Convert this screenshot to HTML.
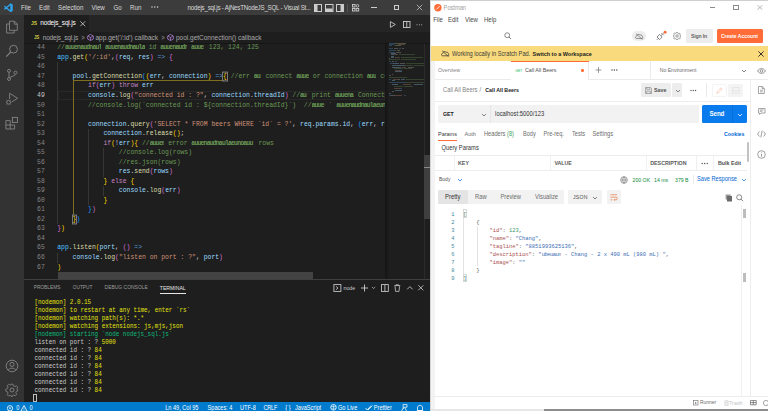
<!DOCTYPE html>
<html><head><meta charset="utf-8"><title>screen</title>
<style>
*{box-sizing:border-box;margin:0;padding:0}
html,body{width:768px;height:411px;overflow:hidden;background:#fff}
body{position:relative;font-family:"Liberation Sans",sans-serif}
.a{position:absolute}
.t{position:absolute;white-space:nowrap;line-height:1;transform:scaleY(1.14);transform-origin:0 50%}
/* VS Code */
#vs{position:absolute;left:0;top:0;width:430px;height:411px;background:#1e1e1e;overflow:hidden}
.ln{position:absolute;left:24px;transform:translateY(0px) scaleY(1.1);transform-origin:0 50%;width:20.8px;text-align:right;font-family:"Liberation Mono",monospace;font-size:6.433px;line-height:9.53px;height:9.53px;color:#858585;white-space:pre}
.ln.cur{color:#c6c6c6}
.cl{position:absolute;left:57.2px;transform:translateY(0.05px) scaleY(1.1);transform-origin:0 50%;font-family:"Liberation Mono",monospace;font-size:6.433px;line-height:9.53px;height:9.53px;white-space:pre}
.th{display:inline-block;overflow:hidden;vertical-align:top;letter-spacing:-0.8px;font-weight:bold}
.bx{outline:1px solid #7a7a7a;outline-offset:-0.5px}
.tl{position:absolute;left:34.5px;transform:translateY(0.3px) scaleY(1.22);transform-origin:0 50%;font-family:"Liberation Mono",monospace;font-size:5.900px;line-height:7.95px;height:7.95px;white-space:pre}
.mt{position:absolute;white-space:nowrap;line-height:1;color:#dadada;font-size:6.2px;transform:scaleY(1.12);transform-origin:0 50%}
.sb{position:absolute;white-space:nowrap;line-height:1;color:#ffffff;font-size:5.6px;top:405.5px;transform:scaleY(1.12);transform-origin:0 50%}
.ic{position:absolute}
/* Postman */
#pm{position:absolute;left:430px;top:0;width:338px;height:411px;background:#ffffff;overflow:hidden}
.p{position:absolute;white-space:nowrap;line-height:1;color:#6b6b6b;transform:scaleY(1.12);transform-origin:0 50%}

</style></head><body>
<div id="vs">
<!-- title bar -->
<div class="a" style="left:0;top:0;width:430px;height:15px;background:#3c3c3c"></div>
<svg class="ic" style="left:0;top:0" width="20" height="15" viewBox="0 0 20 15"><path d="M10.3 3.5 L12.7 4.5 V10.9 L10.3 12 Z" fill="#2ea6f2"/><path d="M10.8 4.1 L4.8 9.1 M10.8 11.4 L4.8 6.4" stroke="#2ea6f2" stroke-width="1.25" stroke-linecap="round"/></svg>
<div class="mt" style="left:21px;top:4.9px">File</div>
<div class="mt" style="left:39px;top:4.9px">Edit</div>
<div class="mt" style="left:58px;top:4.9px">Selection</div>
<div class="mt" style="left:91.5px;top:4.9px">View</div>
<div class="mt" style="left:113.5px;top:4.9px">Go</div>
<div class="mt" style="left:130px;top:4.9px">Run</div>
<svg class="ic" style="left:151px;top:6.2px" width="8" height="2" viewBox="0 0 8 2"><circle cx="1" cy="1" r="0.7" fill="#e0e0e0"/><circle cx="3.8" cy="1" r="0.7" fill="#e0e0e0"/><circle cx="6.6" cy="1" r="0.7" fill="#e0e0e0"/></svg>
<div class="mt" style="left:187.6px;top:4.8px;font-size:6.2px;letter-spacing:-0.23px">nodejs_sql.js - AjNesTNodeJS_SQL - Visual St...</div>
<svg class="ic" style="left:314px;top:4px" width="46" height="8" viewBox="0 0 46 8">
 <rect x="0.5" y="0.5" width="7" height="7" fill="none" stroke="#cccccc" stroke-width="1"/><rect x="1" y="1" width="2.5" height="6" fill="#cccccc"/>
 <rect x="11.5" y="0.5" width="7.5" height="7" fill="none" stroke="#cccccc" stroke-width="1"/><rect x="12" y="4.5" width="6.5" height="2.5" fill="#cccccc"/>
 <rect x="22.5" y="0.5" width="7" height="7" fill="none" stroke="#cccccc" stroke-width="1"/><rect x="26.5" y="1" width="2.5" height="6" fill="#cccccc"/>
 <rect x="33" y="0" width="0.8" height="8" fill="#5a5a5a"/>
 <rect x="38.5" y="0.5" width="2.5" height="2.5" fill="none" stroke="#cccccc" stroke-width="0.9"/><rect x="38.5" y="4.5" width="2.5" height="2.5" fill="none" stroke="#cccccc" stroke-width="0.9"/><circle cx="43.5" cy="1.8" r="1.3" fill="none" stroke="#cccccc" stroke-width="0.9"/><rect x="42.2" y="4.5" width="2.5" height="2.5" fill="none" stroke="#cccccc" stroke-width="0.9"/>
</svg>
<div class="a" style="left:371px;top:7px;width:6px;height:0.8px;background:#cccccc"></div>
<div class="a" style="left:393.5px;top:4.5px;width:5.5px;height:5.5px;border:0.8px solid #cccccc"></div>
<svg class="ic" style="left:416px;top:4px" width="7" height="7" viewBox="0 0 7 7"><path d="M0.8 0.8 L6.2 6.2 M6.2 0.8 L0.8 6.2" stroke="#cccccc" stroke-width="0.75"/></svg>

<!-- activity bar -->
<div class="a" style="left:0;top:15px;width:24px;height:387px;background:#333333"></div>
<svg class="ic" style="left:5px;top:20px" width="14" height="14" viewBox="0 0 14 14"><path d="M4.5 1.2 H9.5 L12.3 4 V10.3 H4.5 Z M9.3 1.2 V4.2 H12.3" fill="none" stroke="#858585" stroke-width="0.9"/><path d="M4.5 4 H1.6 V13 H9.2 V10.3" fill="none" stroke="#858585" stroke-width="0.9"/></svg>
<svg class="ic" style="left:5px;top:44px" width="14" height="14" viewBox="0 0 14 14"><circle cx="8.5" cy="5.2" r="3.9" fill="none" stroke="#858585" stroke-width="0.95"/><path d="M5.7 8 L1.3 12.6" stroke="#858585" stroke-width="1.1"/></svg>
<svg class="ic" style="left:5px;top:68px" width="14" height="14" viewBox="0 0 14 14"><circle cx="4" cy="2.8" r="1.5" fill="none" stroke="#858585" stroke-width="0.9"/><circle cx="4" cy="11" r="1.5" fill="none" stroke="#858585" stroke-width="0.9"/><circle cx="10.4" cy="4.6" r="1.5" fill="none" stroke="#858585" stroke-width="0.9"/><path d="M4 4.3 V9.5 M10.4 6.1 C10.4 8.3 6 8 4.6 9.8" fill="none" stroke="#858585" stroke-width="0.9"/></svg>
<svg class="ic" style="left:5px;top:92px" width="14" height="14" viewBox="0 0 14 14"><path d="M4.6 7 V1.3 L12.6 6.3 L6.8 9.9" fill="none" stroke="#858585" stroke-width="0.9"/><circle cx="3.6" cy="10.3" r="1.9" fill="none" stroke="#858585" stroke-width="0.9"/><path d="M1 10.3 H1.7 M5.5 10.3 H6.3 M1.5 8 L2.3 8.7 M5.7 8 L4.9 8.7 M1.5 12.6 L2.3 11.9 M5.7 12.6 L4.9 11.9" stroke="#858585" stroke-width="0.7"/></svg>
<svg class="ic" style="left:5px;top:116px" width="14" height="14" viewBox="0 0 14 14"><path d="M0.9 4.6 H5.2 V9 H0.9 Z M0.9 9 V13 H9.6 V9 H5.2 V13" fill="none" stroke="#858585" stroke-width="0.9"/><rect x="7.4" y="1.4" width="5" height="5" fill="none" stroke="#858585" stroke-width="0.9"/></svg>
<svg class="ic" style="left:5px;top:359px" width="14" height="14" viewBox="0 0 14 14"><circle cx="7" cy="7" r="5.8" fill="none" stroke="#858585" stroke-width="0.9"/><circle cx="7" cy="5.4" r="2.1" fill="none" stroke="#858585" stroke-width="0.9"/><path d="M3.2 11.2 C4 8.5 10 8.5 10.8 11.2" fill="none" stroke="#858585" stroke-width="0.9"/></svg>
<svg class="ic" style="left:5px;top:383px" width="14" height="14" viewBox="0 0 14 14"><path d="M6 1.2 H8 L8.4 3 L9.8 3.7 L11.4 2.8 L12.8 4.2 L11.9 5.8 L12.5 7.2 L14 7.6 V9.6 M7 4.8 A2.2 2.2 0 1 0 7.01 4.8" fill="none" stroke="#858585" stroke-width="0"/><circle cx="7" cy="7" r="2" fill="none" stroke="#858585" stroke-width="0.9"/><path d="M6 1.2 L8 1.2 L8.4 2.9 L9.9 3.6 L11.4 2.7 L12.8 4.1 L11.9 5.6 L12.5 7.1 L12.8 7 L12.8 7 L12.8 7.9 L11.4 8.3 L10.8 9.8 L11.7 11.4 L10.3 12.8 L8.8 11.9 L7.4 12.5 L7 14 L6 12.6 L5.1 12.2 L3.6 13.1 L2.2 11.7 L3 10.2 L2.4 8.7 L0.8 8.2 V6.2 L2.4 5.7 L3 4.2 L2.2 2.7 L3.6 1.3 L5.1 2.2 L5.6 2.0 Z" fill="none" stroke="#858585" stroke-width="0.85"/></svg>

<!-- tab bar -->
<div class="a" style="left:24px;top:15px;width:406px;height:17px;background:#252526"></div>
<div class="a" style="left:24px;top:15px;width:65px;height:17px;background:#1e1e1e"></div>
<div class="t" style="left:31px;top:21.2px;font-size:5px;font-weight:bold;color:#cbcb41">JS</div>
<div class="t" style="left:40.3px;top:20.4px;font-size:6.5px;color:#ffffff;letter-spacing:-0.18px">nodejs_sql.js</div>
<svg class="ic" style="left:80px;top:21px" width="6" height="6" viewBox="0 0 6 6"><path d="M0.3 0.3 L5.2 5.2 M5.2 0.3 L0.3 5.2" stroke="#d8d8d8" stroke-width="0.75"/></svg>
<svg class="ic" style="left:389px;top:20.5px" width="36" height="7" viewBox="0 0 36 7"><path d="M1.4 0.6 L6.3 3.5 L1.4 6.4 Z" fill="none" stroke="#cccccc" stroke-width="0.85"/><rect x="14.5" y="0.5" width="6.5" height="6" fill="none" stroke="#cccccc" stroke-width="0.9"/><path d="M17.75 0.5 V6.5" stroke="#cccccc" stroke-width="0.9"/><circle cx="28" cy="3.7" r="0.5" fill="#cccccc"/><circle cx="30.3" cy="3.7" r="0.5" fill="#cccccc"/><circle cx="32.6" cy="3.7" r="0.5" fill="#cccccc"/></svg>

<!-- breadcrumb -->
<div class="t" style="left:34px;top:35.6px;font-size:4.6px;font-weight:bold;color:#cbcb41;letter-spacing:-0.2px">JS</div>
<div class="t" style="left:42.7px;top:34.6px;font-size:6.5px;color:#a9a9a9;letter-spacing:-0.17px">nodejs_sql.js</div>
<div class="t" style="left:81.2px;top:34.8px;font-size:6px;color:#a9a9a9">&gt;</div>
<svg class="ic" style="left:86.8px;top:34.2px" width="7" height="7" viewBox="0 0 7 7"><path d="M3.5 0.4 L6.3 2 V5 L3.5 6.6 L0.7 5 V2 Z" fill="none" stroke="#b180d7" stroke-width="0.8"/><path d="M1.2 2.2 L3.5 3.5 L5.8 2.2 M3.5 3.5 V6.2" fill="none" stroke="#b180d7" stroke-width="0.75"/></svg>
<div class="t" style="left:95.5px;top:34.6px;font-size:6.53px;color:#a9a9a9">app.get('/:id') callback</div>
<div class="t" style="left:161.2px;top:34.8px;font-size:6px;color:#a9a9a9">&gt;</div>
<svg class="ic" style="left:167px;top:34.2px" width="7" height="7" viewBox="0 0 7 7"><path d="M3.5 0.4 L6.3 2 V5 L3.5 6.6 L0.7 5 V2 Z" fill="none" stroke="#b180d7" stroke-width="0.8"/><path d="M1.2 2.2 L3.5 3.5 L5.8 2.2 M3.5 3.5 V6.2" fill="none" stroke="#b180d7" stroke-width="0.75"/></svg>
<div class="t" style="left:176px;top:34.6px;font-size:6.49px;color:#a9a9a9">pool.getConnection() callback</div>
<div class="a" style="left:24px;top:43px;width:406px;height:1px;background:#161616"></div>

<!-- editor -->
<div class="a" style="left:57.7px;top:90.6px;width:327px;height:9.4px;border:1px solid #282828"></div>
<div style="position:absolute;left:57.00px;top:62.41px;width:1px;height:162.01px;background:#363636"></div>
<div style="position:absolute;left:73.00px;top:81.47px;width:1px;height:133.42px;background:#363636"></div>
<div style="position:absolute;left:88.00px;top:129.12px;width:1px;height:76.24px;background:#363636"></div>
<div style="position:absolute;left:103.00px;top:148.18px;width:1px;height:28.59px;background:#363636"></div>
<div style="position:absolute;left:103.00px;top:186.30px;width:1px;height:9.53px;background:#363636"></div>
<div style="position:absolute;left:57.00px;top:253.01px;width:1px;height:9.53px;background:#363636"></div>
<div style="position:absolute;left:73px;top:80px;width:1px;height:134.89px;background:#7f6d20"></div>
<div style="position:absolute;left:73px;top:80px;width:150.54px;height:1px;background:#7f6d20"></div>
<div class="ln" style="top:43.35px">44</div>
<div class="cl" style="top:43.35px"><span style="color:#6a9955">//</span><span class="th" style="width:36.28px;color:#6a9955">auuenaudnaul</span><span style="color:#6a9955"> </span><span class="th" style="width:39.76px;color:#6a9955">auuenaudnaula</span><span style="color:#6a9955"> id </span><span class="th" style="width:27.02px;color:#6a9955">auuenaudn</span><span style="color:#6a9955"> </span><span class="th" style="width:13.90px;color:#6a9955">auue</span><span style="color:#6a9955"> 123, 124, 125</span></div>
<div class="ln" style="top:52.88px">45</div>
<div class="cl" style="top:52.88px"><span style="color:#4fc1ff">app</span><span style="color:#d4d4d4">.</span><span style="color:#dcdcaa">get</span><span style="color:#ffd700">(</span><span style="color:#ce9178">&#x27;/:id&#x27;</span><span style="color:#d4d4d4">,</span><span style="color:#da70d6">(</span><span style="color:#9cdcfe">req</span><span style="color:#d4d4d4">, </span><span style="color:#9cdcfe">res</span><span style="color:#da70d6">)</span><span style="color:#d4d4d4"> </span><span style="color:#569cd6">=&gt;</span><span style="color:#d4d4d4"> </span><span style="color:#da70d6">{</span></div>
<div class="ln" style="top:62.41px">46</div>
<div class="cl" style="top:62.41px"></div>
<div class="ln" style="top:71.94px">47</div>
<div class="cl" style="top:71.94px"><span style="color:#d4d4d4">    </span><span style="color:#9cdcfe">pool</span><span style="color:#d4d4d4">.</span><span style="color:#dcdcaa">getConnection</span><span style="color:#179fff">(</span><span style="color:#ffd700">(</span><span style="color:#9cdcfe">err</span><span style="color:#d4d4d4">, </span><span style="color:#9cdcfe">connection</span><span style="color:#ffd700">)</span><span style="color:#d4d4d4"> </span><span style="color:#569cd6">=&gt;</span><span class="bx" style="color:#ffd700">{</span><span style="color:#6a9955"> //err </span><span class="th" style="width:7.72px;color:#6a9955">au</span><span style="color:#6a9955"> connect </span><span class="th" style="width:12.74px;color:#6a9955">auue</span><span style="color:#6a9955"> or connection </span><span class="th" style="width:9.65px;color:#6a9955">auu</span><span style="color:#6a9955"> connect</span></div>
<div class="ln" style="top:81.47px">48</div>
<div class="cl" style="top:81.47px"><span style="color:#d4d4d4">        </span><span style="color:#c586c0">if</span><span style="color:#da70d6">(</span><span style="color:#9cdcfe">err</span><span style="color:#da70d6">)</span><span style="color:#d4d4d4"> </span><span style="color:#c586c0">throw</span><span style="color:#d4d4d4"> </span><span style="color:#9cdcfe">err</span></div>
<div class="ln cur" style="top:91.00px">49</div>
<div class="cl" style="top:91.00px"><span style="color:#d4d4d4">        </span><span style="color:#9cdcfe">console</span><span style="color:#d4d4d4">.</span><span style="color:#dcdcaa">log</span><span style="color:#da70d6">(</span><span style="color:#ce9178">&quot;connected id : ?&quot;</span><span style="color:#d4d4d4">, </span><span style="color:#9cdcfe">connection</span><span style="color:#d4d4d4">.</span><span style="color:#9cdcfe">threadId</span><span style="color:#da70d6">)</span><span style="color:#6a9955"> //</span><span class="th" style="width:7.72px;color:#6a9955">au</span><span style="color:#6a9955"> print </span><span class="th" style="width:19.30px;color:#6a9955">auuena</span><span style="color:#6a9955"> Connected</span></div>
<div class="ln" style="top:100.53px">50</div>
<div class="cl" style="top:100.53px"><span style="color:#6a9955">        //console.log(`connected id : ${connection.threadId}`)  //</span><span class="th" style="width:13.12px;color:#6a9955">auue</span><span style="color:#6a9955"> ` </span><span class="th" style="width:54.04px;color:#6a9955">auuenaudnaulaeunoa</span></div>
<div class="ln" style="top:110.06px">51</div>
<div class="cl" style="top:110.06px"></div>
<div class="ln" style="top:119.59px">52</div>
<div class="cl" style="top:119.59px"><span style="color:#d4d4d4">        </span><span style="color:#9cdcfe">connection</span><span style="color:#d4d4d4">.</span><span style="color:#dcdcaa">query</span><span style="color:#da70d6">(</span><span style="color:#ce9178">&#x27;SELECT * FROM beers WHERE `id` = ?&#x27;</span><span style="color:#d4d4d4">, </span><span style="color:#9cdcfe">req</span><span style="color:#d4d4d4">.</span><span style="color:#9cdcfe">params</span><span style="color:#d4d4d4">.</span><span style="color:#9cdcfe">id</span><span style="color:#d4d4d4">, </span><span style="color:#179fff">(</span><span style="color:#9cdcfe">err</span><span style="color:#d4d4d4">, </span><span style="color:#9cdcfe">rows</span><span style="color:#179fff">)</span></div>
<div class="ln" style="top:129.12px">53</div>
<div class="cl" style="top:129.12px"><span style="color:#d4d4d4">            </span><span style="color:#9cdcfe">connection</span><span style="color:#d4d4d4">.</span><span style="color:#dcdcaa">release</span><span style="color:#ffd700">(</span><span style="color:#ffd700">)</span><span style="color:#d4d4d4">;</span></div>
<div class="ln" style="top:138.65px">54</div>
<div class="cl" style="top:138.65px"><span style="color:#d4d4d4">            </span><span style="color:#c586c0">if</span><span style="color:#ffd700">(</span><span style="color:#d4d4d4">!</span><span style="color:#9cdcfe">err</span><span style="color:#ffd700">)</span><span style="color:#ffd700">{</span><span style="color:#6a9955"> //</span><span class="th" style="width:14.67px;color:#6a9955">auuen</span><span style="color:#6a9955"> error </span><span class="th" style="width:63.30px;color:#6a9955">auuenaudnaulaeunoauu</span><span style="color:#6a9955"> rows</span></div>
<div class="ln" style="top:148.18px">55</div>
<div class="cl" style="top:148.18px"><span style="color:#6a9955">                //console.log(rows)</span></div>
<div class="ln" style="top:157.71px">56</div>
<div class="cl" style="top:157.71px"><span style="color:#6a9955">                //res.json(rows)</span></div>
<div class="ln" style="top:167.24px">57</div>
<div class="cl" style="top:167.24px"><span style="color:#d4d4d4">                </span><span style="color:#9cdcfe">res</span><span style="color:#d4d4d4">.</span><span style="color:#dcdcaa">send</span><span style="color:#da70d6">(</span><span style="color:#9cdcfe">rows</span><span style="color:#da70d6">)</span></div>
<div class="ln" style="top:176.77px">58</div>
<div class="cl" style="top:176.77px"><span style="color:#d4d4d4">            </span><span style="color:#ffd700">}</span><span style="color:#d4d4d4"> </span><span style="color:#c586c0">else</span><span style="color:#d4d4d4"> </span><span style="color:#ffd700">{</span></div>
<div class="ln" style="top:186.30px">59</div>
<div class="cl" style="top:186.30px"><span style="color:#d4d4d4">                </span><span style="color:#9cdcfe">console</span><span style="color:#d4d4d4">.</span><span style="color:#dcdcaa">log</span><span style="color:#da70d6">(</span><span style="color:#9cdcfe">err</span><span style="color:#da70d6">)</span></div>
<div class="ln" style="top:195.83px">60</div>
<div class="cl" style="top:195.83px"><span style="color:#d4d4d4">            </span><span style="color:#ffd700">}</span></div>
<div class="ln" style="top:205.36px">61</div>
<div class="cl" style="top:205.36px"><span style="color:#d4d4d4">        </span><span style="color:#179fff">}</span><span style="color:#da70d6">)</span></div>
<div class="ln" style="top:214.89px">62</div>
<div class="cl" style="top:214.89px"><span style="color:#d4d4d4">    </span><span class="bx" style="color:#ffd700">}</span><span style="color:#179fff">)</span></div>
<div class="ln" style="top:224.42px">63</div>
<div class="cl" style="top:224.42px"><span style="color:#da70d6">}</span><span style="color:#ffd700">)</span></div>
<div class="ln" style="top:233.95px">64</div>
<div class="cl" style="top:233.95px"></div>
<div class="ln" style="top:243.48px">65</div>
<div class="cl" style="top:243.48px"><span style="color:#4fc1ff">app</span><span style="color:#d4d4d4">.</span><span style="color:#dcdcaa">listen</span><span style="color:#ffd700">(</span><span style="color:#9cdcfe">port</span><span style="color:#d4d4d4">, </span><span style="color:#da70d6">(</span><span style="color:#da70d6">)</span><span style="color:#d4d4d4"> </span><span style="color:#569cd6">=&gt;</span></div>
<div class="ln" style="top:253.01px">66</div>
<div class="cl" style="top:253.01px"><span style="color:#d4d4d4">    </span><span style="color:#9cdcfe">console</span><span style="color:#d4d4d4">.</span><span style="color:#dcdcaa">log</span><span style="color:#da70d6">(</span><span style="color:#ce9178">&quot;listen on port : ?&quot;</span><span style="color:#d4d4d4">, </span><span style="color:#9cdcfe">port</span><span style="color:#da70d6">)</span></div>
<div class="ln" style="top:262.54px">67</div>
<div class="cl" style="top:262.54px"><span style="color:#ffd700">)</span></div>
<!-- minimap -->
<div class="a" style="left:385px;top:43.5px;width:39px;height:235px;background:#1e1e1e"></div>
<div class="a" style="left:385px;top:43.5px;width:4px;height:235px;background:linear-gradient(90deg,#141414,#1e1e1e)"></div>
<div style="position:absolute;left:389px;top:43.00px;width:6px;height:1.1px;background:#4f9fd8;opacity:.3"></div>
<div style="position:absolute;left:395px;top:43.00px;width:11px;height:1.1px;background:#d8d89a;opacity:.3"></div>
<div style="position:absolute;left:389px;top:44.20px;width:6px;height:1.1px;background:#4f9fd8;opacity:.3"></div>
<div style="position:absolute;left:398px;top:44.20px;width:7px;height:1.1px;background:#ce9178;opacity:.3"></div>
<div style="position:absolute;left:389px;top:45.40px;width:3px;height:1.1px;background:#4f9fd8;opacity:.3"></div>
<div style="position:absolute;left:395px;top:45.40px;width:6px;height:1.1px;background:#d8d89a;opacity:.3"></div>
<div style="position:absolute;left:389px;top:47.90px;width:4px;height:1.1px;background:#4f9fd8;opacity:.3"></div>
<div style="position:absolute;left:394px;top:47.90px;width:4px;height:1.1px;background:#c8c8c8;opacity:.3"></div>
<div style="position:absolute;left:399px;top:47.90px;width:2px;height:1.1px;background:#4f9fd8;opacity:.3"></div>
<div style="position:absolute;left:402px;top:47.90px;width:2px;height:1.1px;background:#c8c8c8;opacity:.3"></div>
<div style="position:absolute;left:389px;top:49.70px;width:7px;height:1.1px;background:#4f9fd8;opacity:.3"></div>
<div style="position:absolute;left:397px;top:49.70px;width:3px;height:1.1px;background:#d8d89a;opacity:.3"></div>
<div style="position:absolute;left:389px;top:51.70px;width:6px;height:1.1px;background:#4f9fd8;opacity:.3"></div>
<div style="position:absolute;left:396px;top:51.70px;width:5px;height:1.1px;background:#c8c8c8;opacity:.3"></div>
<div style="position:absolute;left:391px;top:52.90px;width:5px;height:1.1px;background:#9cdcfe;opacity:.3"></div>
<div style="position:absolute;left:391px;top:54.40px;width:3px;height:1.1px;background:#9cdcfe;opacity:.3"></div>
<div style="position:absolute;left:394px;top:54.40px;width:4px;height:1.1px;background:#ce9178;opacity:.3"></div>
<div style="position:absolute;left:399px;top:54.40px;width:16px;height:1.1px;background:#6a9955;opacity:.3"></div>
<div style="position:absolute;left:391px;top:55.70px;width:3px;height:1.1px;background:#9cdcfe;opacity:.3"></div>
<div style="position:absolute;left:391px;top:56.80px;width:3px;height:1.1px;background:#9cdcfe;opacity:.3"></div>
<div style="position:absolute;left:395px;top:56.80px;width:5px;height:1.1px;background:#ce9178;opacity:.3"></div>
<div style="position:absolute;left:401px;top:56.80px;width:22px;height:1.1px;background:#6a9955;opacity:.3"></div>
<div style="position:absolute;left:389px;top:58.40px;width:1px;height:1.1px;background:#c8c8c8;opacity:.3"></div>
<div style="position:absolute;left:389px;top:59.40px;width:11px;height:1.1px;background:#6a9955;opacity:.3"></div>
<div style="position:absolute;left:401px;top:59.40px;width:15px;height:1.1px;background:#6a9955;opacity:.3"></div>
<div style="position:absolute;left:389px;top:60.70px;width:2px;height:1.1px;background:#4f9fd8;opacity:.3"></div>
<div style="position:absolute;left:392px;top:60.70px;width:2px;height:1.1px;background:#c8c8c8;opacity:.3"></div>
<div style="position:absolute;left:395px;top:60.70px;width:2px;height:1.1px;background:#4f9fd8;opacity:.3"></div>
<div style="position:absolute;left:390px;top:62.90px;width:3px;height:1.1px;background:#4f9fd8;opacity:.3"></div>
<div style="position:absolute;left:393px;top:62.90px;width:6px;height:1.1px;background:#9cdcfe;opacity:.3"></div>
<div style="position:absolute;left:400px;top:62.90px;width:5px;height:1.1px;background:#c8c8c8;opacity:.3"></div>
<div style="position:absolute;left:406px;top:62.90px;width:18px;height:1.1px;background:#6a9955;opacity:.3"></div>
<div style="position:absolute;left:392px;top:64.70px;width:13px;height:1.1px;background:#9cdcfe;opacity:.3"></div>
<div style="position:absolute;left:405px;top:64.70px;width:8px;height:1.1px;background:#6a9955;opacity:.3"></div>
<div style="position:absolute;left:414px;top:64.70px;width:10px;height:1.1px;background:#6a9955;opacity:.3"></div>
<div style="position:absolute;left:392px;top:66.60px;width:9px;height:1.1px;background:#9cdcfe;opacity:.3"></div>
<div style="position:absolute;left:402px;top:66.60px;width:4px;height:1.1px;background:#ce9178;opacity:.3"></div>
<div style="position:absolute;left:408px;top:66.60px;width:6px;height:1.1px;background:#c8c8c8;opacity:.3"></div>
<div style="position:absolute;left:394px;top:68.20px;width:9px;height:1.1px;background:#6a9955;opacity:.3"></div>
<div style="position:absolute;left:404px;top:68.20px;width:8px;height:1.1px;background:#6a9955;opacity:.3"></div>
<div style="position:absolute;left:395px;top:70.00px;width:5px;height:1.1px;background:#ce9178;opacity:.3"></div>
<div style="position:absolute;left:400px;top:70.00px;width:2px;height:1.1px;background:#4f9fd8;opacity:.3"></div>
<div style="position:absolute;left:395px;top:71.40px;width:7px;height:1.1px;background:#9cdcfe;opacity:.3"></div>
<div style="position:absolute;left:392px;top:73.90px;width:1px;height:1.1px;background:#c8c8c8;opacity:.3"></div>
<div style="position:absolute;left:389px;top:75.20px;width:2px;height:1.1px;background:#c8c8c8;opacity:.3"></div>
<div style="position:absolute;left:389px;top:76.90px;width:18px;height:1.1px;background:#6a9955;opacity:.3"></div>
<div style="position:absolute;left:389px;top:78.90px;width:2px;height:1.1px;background:#4f9fd8;opacity:.3"></div>
<div style="position:absolute;left:393px;top:78.90px;width:5px;height:1.1px;background:#ce9178;opacity:.3"></div>
<div style="position:absolute;left:398px;top:78.90px;width:2px;height:1.1px;background:#c8c8c8;opacity:.3"></div>
<div style="position:absolute;left:401px;top:78.90px;width:4px;height:1.1px;background:#9cdcfe;opacity:.3"></div>
<div style="position:absolute;left:406px;top:78.90px;width:18px;height:1.1px;background:#6a9955;opacity:.3"></div>
<div style="position:absolute;left:392px;top:80.10px;width:3px;height:1.1px;background:#9cdcfe;opacity:.3"></div>
<div style="position:absolute;left:389px;top:81.90px;width:17px;height:1.1px;background:#4f9fd8;opacity:.3"></div>
<div style="position:absolute;left:406px;top:81.90px;width:18px;height:1.1px;background:#6a9955;opacity:.3"></div>
<div style="position:absolute;left:392px;top:84.00px;width:6px;height:1.1px;background:#9cdcfe;opacity:.3"></div>
<div style="position:absolute;left:403px;top:84.00px;width:8px;height:1.1px;background:#ce9178;opacity:.3"></div>
<div style="position:absolute;left:414px;top:84.00px;width:9px;height:1.1px;background:#9cdcfe;opacity:.3"></div>
<div style="position:absolute;left:394px;top:85.70px;width:9px;height:1.1px;background:#6a9955;opacity:.3"></div>
<div style="position:absolute;left:404px;top:85.70px;width:9px;height:1.1px;background:#6a9955;opacity:.3"></div>
<div style="position:absolute;left:394px;top:87.90px;width:6px;height:1.1px;background:#ce9178;opacity:.3"></div>
<div style="position:absolute;left:400px;top:87.90px;width:2px;height:1.1px;background:#4f9fd8;opacity:.3"></div>
<div style="position:absolute;left:395px;top:89.70px;width:7px;height:1.1px;background:#9cdcfe;opacity:.3"></div>
<div style="position:absolute;left:392px;top:91.40px;width:2px;height:1.1px;background:#c8c8c8;opacity:.3"></div>
<div style="position:absolute;left:389px;top:92.90px;width:2px;height:1.1px;background:#c8c8c8;opacity:.3"></div>
<div style="position:absolute;left:389px;top:94.70px;width:2px;height:1.1px;background:#4f9fd8;opacity:.3"></div>
<div style="position:absolute;left:391px;top:94.70px;width:4px;height:1.1px;background:#c8c8c8;opacity:.3"></div>
<div style="position:absolute;left:395px;top:94.70px;width:7px;height:1.1px;background:#ce9178;opacity:.3"></div>
<div style="position:absolute;left:404px;top:94.70px;width:2px;height:1.1px;background:#4f9fd8;opacity:.3"></div>
<div class="a" style="left:424px;top:43.5px;width:6px;height:235px;background:#1e1e1e;border-left:1px solid #2b2b2b"></div>
<div class="a" style="left:424px;top:155px;width:6px;height:64px;background:#3f3f3f"></div>
<div class="a" style="left:424px;top:167px;width:6px;height:1px;background:#8a8a8a"></div>
<div class="a" style="left:57.8px;top:272px;width:255px;height:6.5px;background:#434343"></div>

<!-- panel -->
<div class="a" style="left:24px;top:278.5px;width:406px;height:1px;background:#3f3f3f"></div>
<div class="t" style="left:33.7px;top:286.2px;font-size:4.8px;color:#9d9d9d">PROBLEMS</div>
<div class="t" style="left:72.7px;top:286.2px;font-size:4.8px;color:#9d9d9d">OUTPUT</div>
<div class="t" style="left:104.6px;top:286.2px;font-size:4.97px;color:#9d9d9d">DEBUG CONSOLE</div>
<div class="t" style="left:159.8px;top:286.2px;font-size:5.12px;color:#e7e7e7">TERMINAL</div>
<div class="a" style="left:159.5px;top:293px;width:26.5px;height:0.8px;background:#e7e7e7"></div>
<svg class="ic" style="left:333px;top:284px" width="92" height="8" viewBox="0 0 92 8">
 <rect x="0.9" y="0.6" width="7" height="6.8" fill="none" stroke="#cccccc" stroke-width="0.85"/><path d="M3 2.3 L5 4 L3 5.7" fill="none" stroke="#cccccc" stroke-width="0.8"/>
 <path d="M28 4 H35 M31.5 0.5 V7.5" stroke="#cccccc" stroke-width="0.9"/>
 <path d="M39 3 L40.6 4.5 L42.2 3" fill="none" stroke="#cccccc" stroke-width="0.7"/>
 <rect x="48.5" y="0.6" width="6.8" height="6.8" fill="none" stroke="#cccccc" stroke-width="0.85"/><path d="M51.9 0.6 V7.4" stroke="#cccccc" stroke-width="0.85"/>
 <path d="M61.3 1.6 H67.3 M63 1.6 V0.8 H65.5 V1.6 M62 2.2 L62.6 7.4 H66 L66.6 2.2" fill="none" stroke="#cccccc" stroke-width="0.8"/>
 <path d="M74.2 5.3 L76.9 2.6 L79.6 5.3" fill="none" stroke="#cccccc" stroke-width="0.85"/>
 <path d="M85.3 1.3 L90.3 6.3 M90.3 1.3 L85.3 6.3" stroke="#cccccc" stroke-width="0.85"/>
</svg>
<div class="t" style="left:343.5px;top:286.1px;font-size:5.2px;color:#cccccc">node</div>
<div class="tl" style="top:298.30px"><span style="color:#e5e510">[nodemon] 2.0.15</span></div>
<div class="tl" style="top:306.25px"><span style="color:#e5e510">[nodemon] to restart at any time, enter `rs`</span></div>
<div class="tl" style="top:314.20px"><span style="color:#e5e510">[nodemon] watching path(s): *.*</span></div>
<div class="tl" style="top:322.15px"><span style="color:#e5e510">[nodemon] watching extensions: js,mjs,json</span></div>
<div class="tl" style="top:330.10px"><span style="color:#0dbc79">[nodemon] starting `node nodejs_sql.js`</span></div>
<div class="tl" style="top:338.05px"><span style="color:#cccccc">listen on port : ? </span><span style="color:#e5e510">5000</span></div>
<div class="tl" style="top:346.00px"><span style="color:#cccccc">connected id : ? </span><span style="color:#e5e510">84</span></div>
<div class="tl" style="top:353.95px"><span style="color:#cccccc">connected id : ? </span><span style="color:#e5e510">84</span></div>
<div class="tl" style="top:361.90px"><span style="color:#cccccc">connected id : ? </span><span style="color:#e5e510">84</span></div>
<div class="tl" style="top:369.85px"><span style="color:#cccccc">connected id : ? </span><span style="color:#e5e510">84</span></div>
<div class="tl" style="top:377.80px"><span style="color:#cccccc">connected id : ? </span><span style="color:#e5e510">84</span></div>
<div class="tl" style="top:385.75px"><span style="color:#cccccc">connected id : ? </span><span style="color:#e5e510">84</span></div>
<div class="a" style="left:33.2px;top:393.7px;width:3.8px;height:8.2px;border:0.8px solid #bdbdbd"></div>

<!-- status bar -->
<div class="a" style="left:0;top:402px;width:430px;height:9px;background:#007acc"></div>
<svg class="ic" style="left:7.3px;top:405px" width="26" height="7" viewBox="0 0 26 7"><circle cx="3" cy="3.3" r="2.7" fill="none" stroke="#fff" stroke-width="0.8"/><path d="M1.9 2.2 L4.1 4.4 M4.1 2.2 L1.9 4.4" stroke="#fff" stroke-width="0.7"/><path d="M17 0.5 L20.2 6.2 H13.8 Z" fill="none" stroke="#fff" stroke-width="0.8"/><path d="M17 2.4 V4.5" stroke="#fff" stroke-width="0.6"/></svg>
<div class="sb" style="left:16.2px">0</div>
<div class="sb" style="left:29.6px">0</div>
<div class="sb" style="left:165.2px">Ln 49, Col 95</div>
<div class="sb" style="left:207.6px">Spaces: 4</div>
<div class="sb" style="left:240px">UTF-8</div>
<div class="sb" style="left:263.5px;letter-spacing:-0.25px">CRLF</div>
<div class="sb" style="left:285.3px;letter-spacing:0px">{ }</div>
<div class="sb" style="left:295px">JavaScript</div>
<svg class="ic" style="left:329.5px;top:404px" width="8" height="7" viewBox="0 0 8 7"><circle cx="3.5" cy="3.3" r="2.8" fill="none" stroke="#fff" stroke-width="0.8"/><path d="M1 2.5 H6 M1 4.2 H6 M3.5 0.5 V6.3" stroke="#fff" stroke-width="0.5"/></svg>
<div class="sb" style="left:338px">Go Live</div>
<svg class="ic" style="left:365px;top:404.5px" width="8" height="6" viewBox="0 0 8 6"><path d="M0.5 3 L2.2 5 L6 0.6 M3 5 L7.5 0.6" fill="none" stroke="#fff" stroke-width="0.8"/></svg>
<div class="sb" style="left:373.8px">Prettier</div>
<svg class="ic" style="left:400px;top:403.8px" width="24" height="8" viewBox="0 0 24 8"><path d="M3 0.6 H7 V3.2 H4.8 L3.3 4.6 Z M3.5 3.5 L1 8 M4.8 3.5 L7 8" fill="none" stroke="#fff" stroke-width="0.75"/><path d="M17.5 6.5 V4 C17.5 2.3 18.5 1.3 20 1.3 C21.5 1.3 22.5 2.3 22.5 4 V6.5 H17.5 M19.4 7.5 H20.6 M16.8 6.5 H23.2" fill="none" stroke="#fff" stroke-width="0.75"/></svg>
</div>

<!-- ================= POSTMAN ================= -->
<div id="pm"></div>
<div class="a" style="left:430px;top:0;width:338px;height:1px;background:#cfcfcf"></div>
<div class="a" style="left:430px;top:0;width:1px;height:411px;background:#d6d6d6"></div>
<div class="a" style="left:431px;top:61px;width:3.5px;height:348px;background:#f3f3f3"></div>
<!-- title -->
<svg class="ic" style="left:434px;top:3.7px" width="8" height="8" viewBox="0 0 8 8"><circle cx="3.9" cy="3.8" r="3.7" fill="#ff6c37"/><path d="M2.4 5.4 L5.6 2.2" stroke="#fff" stroke-width="0.9"/></svg>
<div class="p" style="left:443.6px;top:5.5px;font-size:5.68px;color:#a0a0a0">Postman</div>
<div class="a" style="left:710.3px;top:7.3px;width:5px;height:0.6px;background:#8a8a8a"></div>
<div class="a" style="left:733px;top:5px;width:6px;height:4.8px;border:0.6px solid #8a8a8a"></div>
<svg class="ic" style="left:756.8px;top:5.2px" width="6" height="5" viewBox="0 0 6 5"><path d="M0.3 0.2 L5.5 4.8 M5.5 0.2 L0.3 4.8" stroke="#8a8a8a" stroke-width="0.6"/></svg>
<div class="p" style="left:433.2px;top:17.4px;font-size:6px;color:#484848">File</div>
<div class="p" style="left:448px;top:17.4px;font-size:6px;color:#484848">Edit</div>
<div class="p" style="left:465px;top:17.4px;font-size:6px;color:#484848">View</div>
<div class="p" style="left:484px;top:17.4px;font-size:6px;color:#484848">Help</div>
<!-- header -->
<svg class="ic" style="left:503.5px;top:32.3px" width="8" height="8" viewBox="0 0 8 8"><circle cx="3.2" cy="3.2" r="2.4" fill="none" stroke="#6b6b6b" stroke-width="0.8"/><path d="M5 5 L7 7" stroke="#6b6b6b" stroke-width="0.9"/></svg>
<div class="a" style="left:632.4px;top:31px;width:13.8px;height:9.8px;border-radius:5px;background:#ededed"></div>
<svg class="ic" style="left:635px;top:32.5px" width="9" height="7" viewBox="0 0 9 7"><path d="M1.5 5.5 C0.2 5.5 0.2 3.3 1.6 3.3 C1.8 1.5 3.8 0.8 5 2 C6.8 1.6 7.8 3 7.2 4 C8.4 4.3 8.2 5.5 7.2 5.5 Z M1 0.8 L7.5 6.5" fill="none" stroke="#6b6b6b" stroke-width="0.7"/></svg>
<svg class="ic" style="left:655px;top:30px" width="12" height="11" viewBox="0 0 12 11"><path d="M4.6 4.4 L7.2 7 L4.6 9.6 L2 7 Z" fill="none" stroke="#6b6b6b" stroke-width="0.8"/><path d="M5.9 5.7 L8.8 2.8 M3.3 8.3 L1.8 9.8 M6.3 3.2 L7.6 4.5 M8 4.3 L9 5.3" fill="none" stroke="#6b6b6b" stroke-width="0.75"/><circle cx="10.1" cy="2.2" r="1.45" fill="#ff6c37"/></svg>
<svg class="ic" style="left:673.2px;top:32.2px" width="8" height="8" viewBox="0 0 8 8"><circle cx="4" cy="4" r="1.2" fill="none" stroke="#6b6b6b" stroke-width="0.65"/><path d="M3.4 0.5 H4.6 L4.9 1.4 L5.8 1.8 L6.6 1.3 L7.3 2 L6.9 2.9 L7.2 3.7 L7.6 3.9 V4.4 L7.1 4.6 L6.9 5.5 L7.3 6.2 L6.5 7 L5.7 6.5 L4.8 6.9 L4.6 7.6 H3.4 L3.2 6.9 L2.3 6.5 L1.5 7 L0.8 6.3 L1.2 5.5 L0.9 4.6 L0.4 4.4 V3.6 L1 3.3 L1.3 2.4 L0.9 1.6 L1.6 0.9 L2.4 1.4 L3.2 1 Z" fill="none" stroke="#6b6b6b" stroke-width="0.65"/></svg>
<div class="a" style="left:686px;top:29.1px;width:27.2px;height:13.7px;border-radius:1.5px;background:#ededed"></div>
<div class="p" style="left:691px;top:34.2px;font-size:5.14px;color:#666666;font-weight:bold;letter-spacing:-0.15px">Sign In</div>
<div class="a" style="left:717px;top:29.2px;width:46px;height:13.6px;border-radius:1.5px;background:#ff6c37"></div>
<div class="p" style="left:721px;top:34.2px;font-size:5.03px;color:#ffffff;font-weight:bold">Create Account</div>
<!-- banner -->
<div class="a" style="left:431px;top:46.3px;width:337px;height:14.7px;background:#f9da7c"></div>
<svg class="ic" style="left:440.5px;top:50.3px" width="9" height="7" viewBox="0 0 9 7"><path d="M1.5 5.8 C0.2 5.8 0.2 3.5 1.6 3.5 C1.8 1.7 3.8 1 5 2.2 C6.8 1.8 7.8 3.2 7.2 4.2 C8.4 4.5 8.2 5.8 7.2 5.8 Z M1.2 0.8 L7.5 6.6" fill="none" stroke="#3b3b3b" stroke-width="0.75"/></svg>
<div class="p" style="left:452px;top:52px;font-size:5.7px;color:#3b3b3b">Working locally in Scratch Pad.</div>
<div class="p" style="left:532.5px;top:52.1px;font-size:5.46px;color:#212121;font-weight:bold">Switch to a Workspace</div>
<svg class="ic" style="left:758px;top:51px" width="6" height="6" viewBox="0 0 6 6"><path d="M0.4 0.4 L5.6 5.6 M5.6 0.4 L0.4 5.6" stroke="#212121" stroke-width="0.9"/></svg>
<!-- tabs -->
<div class="a" style="left:434.5px;top:79.2px;width:333.5px;height:0.8px;background:#ebebeb"></div>
<div class="a" style="left:511.3px;top:61px;width:0.8px;height:18.5px;background:#ebebeb"></div>
<div class="a" style="left:511.3px;top:61px;width:77.7px;height:19px;background:#fff;border-right:0.8px solid #ebebeb"></div>
<div class="a" style="left:511.3px;top:61px;width:77.7px;height:1px;background:#ff6c37"></div>
<div class="p" style="left:438px;top:68px;font-size:5.28px;color:#808080">Overview</div>
<div class="p" style="left:515.3px;top:70.1px;font-size:3.5px;color:#0cbb52">GET</div>
<div class="p" style="left:525px;top:68.4px;font-size:5.3px;color:#505050">Call All Beers</div>
<div class="a" style="left:581.2px;top:69.3px;width:2.7px;height:2.7px;border-radius:50%;background:#ff6c37"></div>
<svg class="ic" style="left:595px;top:67.2px" width="25" height="6" viewBox="0 0 25 6"><path d="M0.6 3 H6.4 M3.5 0.1 V5.9" stroke="#6b6b6b" stroke-width="0.7"/><circle cx="17" cy="3" r="0.75" fill="#505050"/><circle cx="19.4" cy="3" r="0.75" fill="#505050"/><circle cx="21.8" cy="3" r="0.75" fill="#505050"/></svg>
<div class="a" style="left:650.3px;top:61px;width:0.8px;height:18.5px;background:#ebebeb"></div>
<div class="p" style="left:659.7px;top:68.1px;font-size:5.12px;color:#6b6b6b">No Environment</div>
<svg class="ic" style="left:740.5px;top:68.5px" width="6" height="4" viewBox="0 0 6 4"><path d="M1 1 L3 3 L5 1" fill="none" stroke="#505050" stroke-width="0.7"/></svg>
<svg class="ic" style="left:756.5px;top:67.5px" width="9" height="6" viewBox="0 0 9 6"><path d="M0.5 3 C2.5 -0.2 6.5 -0.2 8.5 3 C6.5 6.2 2.5 6.2 0.5 3 Z" fill="none" stroke="#6b6b6b" stroke-width="0.7"/><circle cx="4.5" cy="3" r="1.3" fill="none" stroke="#6b6b6b" stroke-width="0.7"/></svg>
<!-- breadcrumb row -->
<div class="p" style="left:443px;top:88.2px;font-size:5.8px;color:#808080">Call All Beers</div>
<div class="p" style="left:479.5px;top:88.2px;font-size:5.8px;color:#808080">/</div>
<div class="p" style="left:485.3px;top:88.2px;font-size:5.26px;color:#212121;font-weight:bold">Call All Beers</div>
<div class="a" style="left:640.5px;top:83px;width:30.5px;height:13.8px;border-radius:1.5px;background:#ededed"></div>
<div class="a" style="left:671.8px;top:83px;width:10.2px;height:13.8px;border-radius:1.5px;background:#ededed"></div>
<svg class="ic" style="left:645px;top:86.8px" width="7" height="7" viewBox="0 0 7 7"><path d="M0.5 0.5 H5.3 L6.5 1.7 V6.5 H0.5 Z M1.8 0.5 V2.4 H4.8 V0.5 M1.7 6.5 V4.2 H5.3 V6.5" fill="none" stroke="#7a7a7a" stroke-width="0.6"/></svg>
<div class="p" style="left:654px;top:87.7px;font-size:5.3px;color:#505050;font-weight:bold">Save</div>
<svg class="ic" style="left:674.5px;top:88.5px" width="6" height="4" viewBox="0 0 6 4"><path d="M1 1 L3 3 L5 1" fill="none" stroke="#505050" stroke-width="0.7"/></svg>
<svg class="ic" style="left:689.5px;top:88.5px" width="7" height="3" viewBox="0 0 7 3"><circle cx="1" cy="1.5" r="0.65" fill="#505050"/><circle cx="3.3" cy="1.5" r="0.65" fill="#505050"/><circle cx="5.6" cy="1.5" r="0.65" fill="#505050"/></svg>
<div class="a" style="left:706.2px;top:83px;width:0.6px;height:14px;background:#ebebeb"></div>
<div class="a" style="left:712px;top:83.5px;width:15px;height:13.5px;border:0.6px solid #f4f4f4;border-radius:1.5px;background:#fff"></div>
<svg class="ic" style="left:716px;top:87px" width="7" height="7" viewBox="0 0 7 7"><path d="M0.8 6.2 L1.2 4.6 L5 0.8 L6.2 2 L2.4 5.8 Z" fill="none" stroke="#f9b9a0" stroke-width="0.65"/></svg>
<div class="a" style="left:728px;top:83.5px;width:15px;height:13.5px;border-radius:1.5px;background:#f4f4f4"></div>
<svg class="ic" style="left:731.5px;top:87px" width="8" height="7" viewBox="0 0 8 7"><path d="M0.6 0.6 H7.4 V6.4 H0.6 Z M0.6 3.5 H2.5 L3 4.5 H5 L5.5 3.5 H7.4" fill="none" stroke="#dedede" stroke-width="0.6"/></svg>
<div class="a" style="left:434.5px;top:100.8px;width:316px;height:0.7px;background:#ededed"></div>
<div class="a" style="left:750.2px;top:79.5px;width:0.7px;height:317px;background:#ededed"></div>
<svg class="ic" style="left:758px;top:86px" width="7" height="8" viewBox="0 0 7 8"><path d="M0.5 0.5 H4.2 L6.3 2.6 V7.5 H0.5 Z M4.2 0.5 V2.6 H6.3 M2 4.2 H4.8 M2 5.8 H4.8" fill="none" stroke="#6b6b6b" stroke-width="0.6"/></svg>
<!-- url -->
<div class="a" style="left:438px;top:105.2px;width:260.5px;height:17.5px;border-radius:1.5px;background:#f2f2f2"></div>
<div class="a" style="left:490px;top:105.2px;width:0.7px;height:17.5px;background:#e6e6e6"></div>
<div class="p" style="left:443px;top:111.6px;font-size:5.21px;color:#212121;font-weight:bold">GET</div>
<svg class="ic" style="left:480.5px;top:112.8px" width="6" height="4" viewBox="0 0 6 4"><path d="M1 1 L3 3 L5 1" fill="none" stroke="#505050" stroke-width="0.7"/></svg>
<div class="p" style="left:495.1px;top:111.6px;font-size:5.85px;color:#333333">localhost:5000/123</div>
<div class="a" style="left:702px;top:105px;width:45px;height:18px;border-radius:1.5px;background:#097bed"></div>
<div class="a" style="left:732.4px;top:105px;width:0.6px;height:18px;background:#0a6fd4"></div>
<div class="p" style="left:709.5px;top:111.3px;font-size:6.22px;color:#ffffff;font-weight:bold;letter-spacing:-0.1px">Send</div>
<svg class="ic" style="left:736.5px;top:112.5px" width="6" height="4" viewBox="0 0 6 4"><path d="M1 1 L3 3 L5 1" fill="none" stroke="#ffffff" stroke-width="0.75"/></svg>
<svg class="ic" style="left:758px;top:108.2px" width="7.5" height="7" viewBox="0 0 7.5 7"><path d="M0.5 0.5 H7 V5 H3 L1.6 6.4 V5 H0.5 Z M1.8 2 H5.6 M1.8 3.3 H4.4" fill="none" stroke="#6b6b6b" stroke-width="0.6"/></svg>
<!-- params tabs -->
<div class="p" style="left:438px;top:131.7px;font-size:5.51px;color:#333333">Params</div>
<div class="a" style="left:438px;top:139.8px;width:19px;height:1px;background:#ff6c37"></div>
<div class="p" style="left:464.5px;top:131.7px;font-size:5.5px;color:#6b6b6b">Auth</div>
<div class="p" style="left:484px;top:131.7px;font-size:5.68px;color:#6b6b6b">Headers <span style="color:#3f9f62">(8)</span></div>
<div class="p" style="left:523px;top:131.7px;font-size:5.6px;color:#6b6b6b">Body</div>
<div class="p" style="left:543.6px;top:131.7px;font-size:5.6px;color:#6b6b6b">Pre-req.</div>
<div class="p" style="left:572px;top:131.7px;font-size:5.6px;color:#6b6b6b">Tests</div>
<div class="p" style="left:592.6px;top:131.7px;font-size:5.65px;color:#6b6b6b">Settings</div>
<div class="p" style="left:724px;top:132.1px;font-size:5.25px;color:#0265d2;font-weight:bold">Cookies</div>
<svg class="ic" style="left:756.5px;top:130px" width="9" height="8" viewBox="0 0 9 8"><path d="M2.4 1.5 L0.6 4 L2.4 6.5 M6.6 1.5 L8.4 4 L6.6 6.5 M5.2 0.6 L3.8 7.4" fill="none" stroke="#6b6b6b" stroke-width="0.65"/></svg>
<!-- query params -->
<div class="p" style="left:441.5px;top:146px;font-size:5.79px;color:#333333">Query Params</div>
<div class="a" style="left:434.5px;top:155.3px;width:312px;height:0.7px;background:#ededed"></div>
<div class="a" style="left:434.5px;top:169.9px;width:312px;height:0.7px;background:#ededed"></div>
<div class="a" style="left:454px;top:155.5px;width:1px;height:14.6px;background:#f0f0f0"></div>
<div class="a" style="left:550px;top:155.5px;width:1px;height:14.6px;background:#f0f0f0"></div>
<div class="a" style="left:646px;top:155.5px;width:1px;height:14.6px;background:#f0f0f0"></div>
<div class="a" style="left:696px;top:155.5px;width:1px;height:14.6px;background:#f0f0f0"></div>
<div class="a" style="left:713px;top:155.5px;width:1px;height:14.6px;background:#f0f0f0"></div>
<div class="p" style="left:458px;top:160.5px;font-size:5.35px;color:#505050;font-weight:bold;color:#5a5a5a">KEY</div>
<div class="p" style="left:554.4px;top:160.5px;font-size:5.28px;color:#505050;font-weight:bold;color:#5a5a5a">VALUE</div>
<div class="p" style="left:650.2px;top:160.5px;font-size:5.34px;color:#505050;font-weight:bold;color:#5a5a5a">DESCRIPTION</div>
<svg class="ic" style="left:700.5px;top:162px" width="8" height="3" viewBox="0 0 8 3"><circle cx="1.2" cy="1.5" r="0.7" fill="#505050"/><circle cx="3.7" cy="1.5" r="0.7" fill="#505050"/><circle cx="6.2" cy="1.5" r="0.7" fill="#505050"/></svg>
<div class="p" style="left:718px;top:160.5px;font-size:5.31px;color:#505050;font-weight:bold">Bulk Edit</div>
<div class="a" style="left:746.5px;top:142px;width:2.5px;height:20px;border-radius:1px;background:#c2c2c2"></div>
<svg class="ic" style="left:756.5px;top:149.5px" width="9" height="9" viewBox="0 0 9 9"><circle cx="4.5" cy="4.5" r="3.8" fill="none" stroke="#6b6b6b" stroke-width="0.65"/><path d="M4.5 3.8 V6.6" stroke="#6b6b6b" stroke-width="0.7"/><circle cx="4.5" cy="2.6" r="0.45" fill="#6b6b6b"/></svg>
<!-- response bar -->
<div class="p" style="left:439px;top:176.7px;font-size:5px;color:#505050">Body</div>
<svg class="ic" style="left:456.5px;top:177.8px" width="6" height="4" viewBox="0 0 6 4"><path d="M1 1 L3 3 L5 1" fill="none" stroke="#0265d2" stroke-width="0.7"/></svg>
<svg class="ic" style="left:619.5px;top:175.8px" width="8" height="8" viewBox="0 0 8 8"><circle cx="4" cy="4" r="3.3" fill="none" stroke="#6b6b6b" stroke-width="0.65"/><path d="M0.7 4 H7.3 M4 0.7 V7.3 M4 0.7 C2 2.5 2 5.5 4 7.3 M4 0.7 C6 2.5 6 5.5 4 7.3" fill="none" stroke="#6b6b6b" stroke-width="0.5"/></svg>
<div class="p" style="left:632.5px;top:177.8px;font-size:5.2px;color:#0a8a3a">200 OK</div>
<div class="p" style="left:654px;top:177.8px;font-size:5.2px;color:#0a8a3a">14 ms</div>
<div class="p" style="left:675px;top:177.8px;font-size:5.2px;color:#0a8a3a">379 B</div>
<div class="a" style="left:692.8px;top:175px;width:0.6px;height:9px;background:#ededed"></div>
<div class="p" style="left:697px;top:177.3px;font-size:5.67px;color:#0265d2">Save Response</div>
<svg class="ic" style="left:741px;top:178px" width="6" height="4" viewBox="0 0 6 4"><path d="M1 1 L3 3 L5 1" fill="none" stroke="#0265d2" stroke-width="0.7"/></svg>
<!-- pretty bar -->
<div class="a" style="left:438px;top:190.2px;width:126.4px;height:13.5px;border-radius:1.5px;background:#f2f2f2"></div>
<div class="a" style="left:438px;top:190.2px;width:29.6px;height:13.5px;border-radius:1.5px;background:#e4e4e4"></div>
<div class="p" style="left:445px;top:194.8px;font-size:5.93px;color:#333333">Pretty</div>
<div class="p" style="left:475px;top:194.5px;font-size:5.8px;color:#6b6b6b">Raw</div>
<div class="p" style="left:500.5px;top:194.5px;font-size:5.76px;color:#6b6b6b">Preview</div>
<div class="p" style="left:535px;top:194.5px;font-size:5.77px;color:#6b6b6b">Visualize</div>
<div class="a" style="left:568.3px;top:190.2px;width:34.2px;height:14px;border-radius:1.5px;background:#f2f2f2"></div>
<div class="p" style="left:573px;top:195px;font-size:5.2px;color:#505050;letter-spacing:0.2px">JSON</div>
<svg class="ic" style="left:591.5px;top:196px" width="6" height="4" viewBox="0 0 6 4"><path d="M1 1 L3 3 L5 1" fill="none" stroke="#505050" stroke-width="0.7"/></svg>
<div class="a" style="left:606.5px;top:190.2px;width:14.5px;height:14px;border-radius:1.5px;background:#f2f2f2"></div>
<svg class="ic" style="left:610px;top:193.5px" width="8" height="7" viewBox="0 0 8 7"><path d="M0.5 0.8 H7 M0.5 3.2 H6.2 C7.6 3.2 7.6 5.8 6.2 5.8 H4.2 M0.5 5.8 H2.5 M5 4.9 L4.1 5.8 L5 6.7" fill="none" stroke="#e8743f" stroke-width="0.7"/></svg>
<svg class="ic" style="left:724.8px;top:193.5px" width="19" height="8" viewBox="0 0 19 8"><rect x="0.6" y="0.5" width="5" height="5" fill="#9a9a9a"/><rect x="2" y="2" width="5" height="5.5" fill="#6b6b6b"/><circle cx="14.2" cy="3.3" r="2.5" fill="none" stroke="#6b6b6b" stroke-width="0.8"/><path d="M16 5.1 L18 7.2" stroke="#6b6b6b" stroke-width="0.9"/></svg>
<!-- json -->
<div class="a" style="left:741.3px;top:205px;width:0.6px;height:191.5px;background:#f0f0f0"></div>
<div class="a" style="left:743px;top:209.3px;width:2.5px;height:8.3px;background:#bdbdbd"></div>
<div class="a" style="left:743px;top:273.4px;width:2.5px;height:9px;background:#bdbdbd"></div>
<div class="a" style="left:463.2px;top:217.5px;width:0.7px;height:56.5px;background:#e3e3e3"></div>
<div class="a" style="left:462.9px;top:209.2px;width:3.8px;height:8.4px;border:0.6px solid #d6d6d6"></div>
<div class="a" style="left:462.9px;top:274px;width:3.8px;height:8.4px;border:0.6px solid #d6d6d6"></div>
<div class="a" style="left:477px;top:225.5px;width:0.6px;height:40.5px;background:#e3e3e3"></div>
<div class="p" style="left:436px;width:18.5px;text-align:right;top:210.76px;font-family:'Liberation Mono',monospace;font-size:5.450px;line-height:8.08px;color:#3d8aa3;transform:scaleY(1.12);transform-origin:0 50%">1</div>
<div class="p" style="left:463.3px;top:210.76px;font-family:'Liberation Mono',monospace;font-size:5.450px;line-height:8.08px;white-space:pre;transform:scaleY(1.12);transform-origin:0 50%"><span style="color:#2f7a55">[</span></div>
<div class="p" style="left:436px;width:18.5px;text-align:right;top:218.84px;font-family:'Liberation Mono',monospace;font-size:5.450px;line-height:8.08px;color:#3d8aa3;transform:scaleY(1.12);transform-origin:0 50%">2</div>
<div class="p" style="left:463.3px;top:218.84px;font-family:'Liberation Mono',monospace;font-size:5.450px;line-height:8.08px;white-space:pre;transform:scaleY(1.12);transform-origin:0 50%"><span style="color:#555555">    {</span></div>
<div class="p" style="left:436px;width:18.5px;text-align:right;top:226.92px;font-family:'Liberation Mono',monospace;font-size:5.450px;line-height:8.08px;color:#3d8aa3;transform:scaleY(1.12);transform-origin:0 50%">3</div>
<div class="p" style="left:463.3px;top:226.92px;font-family:'Liberation Mono',monospace;font-size:5.450px;line-height:8.08px;white-space:pre;transform:scaleY(1.12);transform-origin:0 50%"><span style="color:#555555">        </span><span style="color:#a8504f">&quot;id&quot;</span><span style="color:#555555">: </span><span style="color:#3d9a72">123</span><span style="color:#555555">,</span></div>
<div class="p" style="left:436px;width:18.5px;text-align:right;top:235.00px;font-family:'Liberation Mono',monospace;font-size:5.450px;line-height:8.08px;color:#3d8aa3;transform:scaleY(1.12);transform-origin:0 50%">4</div>
<div class="p" style="left:463.3px;top:235.00px;font-family:'Liberation Mono',monospace;font-size:5.450px;line-height:8.08px;white-space:pre;transform:scaleY(1.12);transform-origin:0 50%"><span style="color:#555555">        </span><span style="color:#a8504f">&quot;name&quot;</span><span style="color:#555555">: </span><span style="color:#3b6db3">&quot;Chang&quot;</span><span style="color:#555555">,</span></div>
<div class="p" style="left:436px;width:18.5px;text-align:right;top:243.08px;font-family:'Liberation Mono',monospace;font-size:5.450px;line-height:8.08px;color:#3d8aa3;transform:scaleY(1.12);transform-origin:0 50%">5</div>
<div class="p" style="left:463.3px;top:243.08px;font-family:'Liberation Mono',monospace;font-size:5.450px;line-height:8.08px;white-space:pre;transform:scaleY(1.12);transform-origin:0 50%"><span style="color:#555555">        </span><span style="color:#a8504f">&quot;tagline&quot;</span><span style="color:#555555">: </span><span style="color:#3b6db3">&quot;8851993625136&quot;</span><span style="color:#555555">,</span></div>
<div class="p" style="left:436px;width:18.5px;text-align:right;top:251.16px;font-family:'Liberation Mono',monospace;font-size:5.450px;line-height:8.08px;color:#3d8aa3;transform:scaleY(1.12);transform-origin:0 50%">6</div>
<div class="p" style="left:463.3px;top:251.16px;font-family:'Liberation Mono',monospace;font-size:5.450px;line-height:8.08px;white-space:pre;transform:scaleY(1.12);transform-origin:0 50%"><span style="color:#555555">        </span><span style="color:#a8504f">&quot;description&quot;</span><span style="color:#555555">: </span><span style="color:#3b6db3">&quot;</span><span style="display:inline-block;width:19.62px;overflow:hidden;vertical-align:top;letter-spacing:-0.5px;color:#3b6db3">ubeuauna</span><span style="color:#3b6db3"> - Chang - 2 x 490 mL (980 mL) &quot;</span><span style="color:#555555">,</span></div>
<div class="p" style="left:436px;width:18.5px;text-align:right;top:259.24px;font-family:'Liberation Mono',monospace;font-size:5.450px;line-height:8.08px;color:#3d8aa3;transform:scaleY(1.12);transform-origin:0 50%">7</div>
<div class="p" style="left:463.3px;top:259.24px;font-family:'Liberation Mono',monospace;font-size:5.450px;line-height:8.08px;white-space:pre;transform:scaleY(1.12);transform-origin:0 50%"><span style="color:#555555">        </span><span style="color:#a8504f">&quot;image&quot;</span><span style="color:#555555">: </span><span style="color:#3b6db3">&quot;&quot;</span></div>
<div class="p" style="left:436px;width:18.5px;text-align:right;top:267.32px;font-family:'Liberation Mono',monospace;font-size:5.450px;line-height:8.08px;color:#3d8aa3;transform:scaleY(1.12);transform-origin:0 50%">8</div>
<div class="p" style="left:463.3px;top:267.32px;font-family:'Liberation Mono',monospace;font-size:5.450px;line-height:8.08px;white-space:pre;transform:scaleY(1.12);transform-origin:0 50%"><span style="color:#555555">    }</span></div>
<div class="p" style="left:436px;width:18.5px;text-align:right;top:275.40px;font-family:'Liberation Mono',monospace;font-size:5.450px;line-height:8.08px;color:#3d8aa3;transform:scaleY(1.12);transform-origin:0 50%">9</div>
<div class="p" style="left:463.3px;top:275.40px;font-family:'Liberation Mono',monospace;font-size:5.450px;line-height:8.08px;white-space:pre;transform:scaleY(1.12);transform-origin:0 50%"><span style="color:#2f7a55">]</span></div>
<!-- footer -->
<div class="a" style="left:431px;top:396.3px;width:337px;height:0.7px;background:#ededed"></div>
<svg class="ic" style="left:693px;top:400px" width="6" height="6" viewBox="0 0 6 6"><rect x="0.4" y="0.4" width="4.6" height="4.6" fill="none" stroke="#6b6b6b" stroke-width="0.6"/><path d="M2.2 1.8 L3.8 3 L2.2 4.2 Z" fill="#6b6b6b"/></svg>
<div class="p" style="left:700px;top:401.3px;font-size:4.9px;color:#6b6b6b">Runner</div>
<svg class="ic" style="left:723.8px;top:400px" width="5" height="6" viewBox="0 0 5 6"><path d="M0.4 1 H4.6 M0.9 1 V5.6 H4.1 V1 M1.7 0.4 H3.3 M1.9 2 V4.6 M3.1 2 V4.6" fill="none" stroke="#c4c4c4" stroke-width="0.55"/></svg>
<div class="p" style="left:729px;top:400.8px;font-size:5.4px;color:#c4c4c4">Trash</div>
<svg class="ic" style="left:750px;top:400px" width="7" height="6" viewBox="0 0 7 6"><path d="M0.4 0.4 H6.2 V4.8 H0.4 Z M0.4 2.6 H6.2 M3.3 0.4 V4.8" fill="none" stroke="#505050" stroke-width="0.65"/></svg>
<svg class="ic" style="left:763px;top:399.8px" width="6" height="6" viewBox="0 0 6 6"><circle cx="3" cy="3" r="2.6" fill="none" stroke="#6b6b6b" stroke-width="0.6"/></svg>
<div class="a" style="left:431px;top:408.8px;width:112.6px;height:2.2px;background:#e6e6e6"></div>
<div class="a" style="left:543.6px;top:408.8px;width:224.4px;height:2.2px;background:#8c8c8c"></div>

</body></html>
